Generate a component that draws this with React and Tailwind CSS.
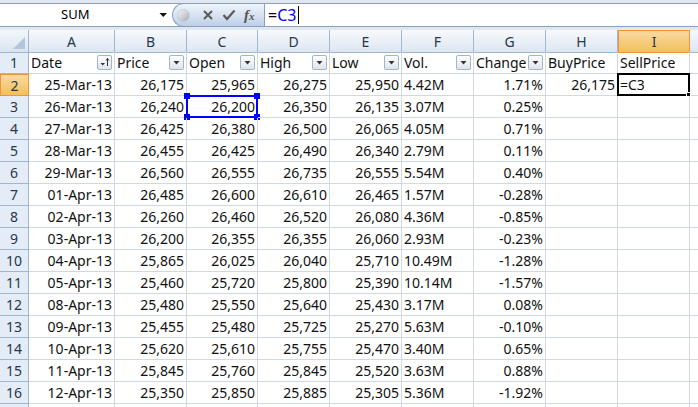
import React from 'react';

const cols = ['A', 'B', 'C', 'D', 'E', 'F', 'G', 'H', 'I'];
const gridCols = 'grid grid-cols-[29px_86px_72px_71px_72px_72px_72px_72px_72px_72px_1fr]';

const headers = [
  { t: 'Date', f: 'sort' },
  { t: 'Price', f: 'down' },
  { t: 'Open', f: 'down' },
  { t: 'High', f: 'down' },
  { t: 'Low', f: 'down' },
  { t: 'Vol.', f: 'down' },
  { t: 'Change', f: 'down' },
  { t: 'BuyPrice' },
  { t: 'SellPrice' },
];

const rows = [
  ['25-Mar-13', '26,175', '25,965', '26,275', '25,950', '4.42M', '1.71%', '26,175', '=C3'],
  ['26-Mar-13', '26,240', '26,200', '26,350', '26,135', '3.07M', '0.25%'],
  ['27-Mar-13', '26,425', '26,380', '26,500', '26,065', '4.05M', '0.71%'],
  ['28-Mar-13', '26,455', '26,425', '26,490', '26,340', '2.79M', '0.11%'],
  ['29-Mar-13', '26,560', '26,555', '26,735', '26,555', '5.54M', '0.40%'],
  ['01-Apr-13', '26,485', '26,600', '26,610', '26,465', '1.57M', '-0.28%'],
  ['02-Apr-13', '26,260', '26,460', '26,520', '26,080', '4.36M', '-0.85%'],
  ['03-Apr-13', '26,200', '26,355', '26,355', '26,060', '2.93M', '-0.23%'],
  ['04-Apr-13', '25,865', '26,025', '26,040', '25,710', '10.49M', '-1.28%'],
  ['05-Apr-13', '25,460', '25,720', '25,800', '25,390', '10.14M', '-1.57%'],
  ['08-Apr-13', '25,480', '25,550', '25,640', '25,430', '3.17M', '0.08%'],
  ['09-Apr-13', '25,455', '25,480', '25,725', '25,270', '5.63M', '-0.10%'],
  ['10-Apr-13', '25,620', '25,610', '25,755', '25,470', '3.40M', '0.65%'],
  ['11-Apr-13', '25,845', '25,760', '25,845', '25,520', '3.63M', '0.88%'],
  ['12-Apr-13', '25,350', '25,850', '25,885', '25,305', '5.36M', '-1.92%'],
];

const FilterButton = ({ sort }) => (
  <div className="w-[15px] h-[15px] shrink-0 rounded-[2px] border border-[#a5b3c6] bg-gradient-to-b from-[#fdfdfe] to-[#dfe5ee] flex items-center justify-center">
    <svg width="13" height="13" viewBox="0 0 13 13">
      {sort ? (
        <>
          <path d="M2.5 7 L7 7 L4.75 9.5 Z" fill="#333" />
          <path d="M9.5 2.5 L9.5 10" stroke="#333" strokeWidth="1" />
          <path d="M8 4.5 L9.5 2.5 L11 4.5" stroke="#333" strokeWidth="1" fill="none" />
        </>
      ) : (
        <path d="M3.5 5 L9.5 5 L6.5 8.5 Z" fill="#333" />
      )}
    </svg>
  </div>
);

const cellBase = 'relative h-[22px] border-r border-b border-[#d0d7e5] px-[2px] flex items-center whitespace-nowrap';

const App = () => {
  return (
    <div className="w-[698px] h-[407px] overflow-hidden bg-white text-[#111] font-['Noto_Sans',sans-serif]">
      {/* Formula bar */}
      <div className="h-[30px] bg-[#dfe7f1] pt-[3px]">
        <div className="h-[24px] flex border-y border-[#8ba0bc] bg-white">
          <div className="w-[172px] flex items-center pl-[61px] pr-[4px] text-[13px] text-black">
            <span className="flex-1">SUM</span>
            <svg width="9" height="6" viewBox="0 0 9 6">
              <path d="M0.5 1 L8 1 L4.25 5 Z" fill="#111" />
            </svg>
          </div>
          <div className="w-[92px] -my-px rounded-l-full border border-r-0 border-[#8ba0bc] bg-gradient-to-b from-[#eef3fa] via-[#d8e3f2] to-[#bccfe8] flex items-center pl-[4px] gap-[8px]">
            <div className="w-[13px] h-[13px] rounded-full bg-gradient-to-br from-[#f4f4f4] to-[#a9aeb6] border border-[#c5ccd6]" />
            <svg width="12" height="12" viewBox="0 0 12 12" className="ml-[4px]">
              <path d="M2 2 L10 10 M10 2 L2 10" stroke="#5b5b5b" strokeWidth="2" />
            </svg>
            <svg width="14" height="12" viewBox="0 0 14 12">
              <path d="M1.5 6 L5 10 L12.5 1.5" stroke="#5b5b5b" strokeWidth="2.2" fill="none" />
            </svg>
            <span className="font-['Liberation_Serif',serif] italic font-bold text-[15px] text-[#555] leading-none">
              f<span className="text-[11px]">x</span>
            </span>
          </div>
          <div className="flex-1 border-l border-[#8ba0bc] flex items-center pl-[3px] text-[16px]">
            <span className="text-black">=</span>
            <span className="text-[#0000ff]">C3</span>
            <span className="w-px h-[18px] bg-black ml-[2px]" />
          </div>
        </div>
      </div>

      {/* Column headers */}
      <div className={`${gridCols} h-[22px] text-[14px] text-[#27374d]`}>
        <div className="relative border-r border-b border-[#9eb6ce] bg-gradient-to-b from-[#f3f7fb] to-[#dae4f0]">
          <svg width="14" height="14" viewBox="0 0 14 14" className="absolute right-[2px] bottom-[2px]">
            <path d="M13 1 L13 13 L1 13 Z" fill="#b6c6da" />
          </svg>
        </div>
        {cols.map((c) =>
          c === 'I' ? (
            <div key={c} className="border border-[#f29436] bg-gradient-to-b from-[#f9d99f] to-[#f1c05c] flex items-center justify-center">
              {c}
            </div>
          ) : (
            <div key={c} className="border-r border-b border-[#9eb6ce] bg-gradient-to-b from-[#f7f9fc] to-[#dde6f1] flex items-center justify-center">
              {c}
            </div>
          )
        )}
        <div className="border-b border-[#9eb6ce] bg-gradient-to-b from-[#f7f9fc] to-[#dde6f1]" />
      </div>

      {/* Row 1: table headers */}
      <div className={`${gridCols} text-[14px]`}>
        <div className="h-[22px] border-r border-b border-[#9eb6ce] bg-[#e4ecf7] flex items-center justify-center text-[#27374d]">1</div>
        {headers.map((h, i) => (
          <div key={i} className={`${cellBase} justify-between overflow-hidden`}>
            <span className="overflow-hidden">{h.t}</span>
            {h.f && <FilterButton sort={h.f === 'sort'} />}
          </div>
        ))}
        <div className="h-[22px] border-b border-[#d0d7e5]" />
      </div>

      {/* Data rows */}
      {rows.map((r, ri) => {
        const rowNum = ri + 2;
        return (
          <div key={rowNum} className={`${gridCols} text-[14px]`}>
            {rowNum === 2 ? (
              <div className="h-[22px] border border-[#f29436] bg-gradient-to-b from-[#f9d99f] to-[#f1c05c] flex items-center justify-center text-[#27374d]">
                {rowNum}
              </div>
            ) : (
              <div className="h-[22px] border-r border-b border-[#9eb6ce] bg-[#e4ecf7] flex items-center justify-center text-[#27374d]">
                {rowNum}
              </div>
            )}
            {cols.map((c, ci) => {
              const v = r[ci] || '';
              const left = ci === 5 || ci === 8;
              return (
                <div key={c} className={`${cellBase} ${left ? 'justify-start' : 'justify-end'}`}>
                  {v}
                  {rowNum === 3 && c === 'C' && (
                    <div className="absolute -left-px -top-px w-[72px] h-[23px] border-2 border-[#0000ff]">
                      <div className="absolute -left-[4px] -top-[4px] w-[6px] h-[6px] bg-[#0000ff]" />
                      <div className="absolute -right-[4px] -top-[4px] w-[6px] h-[6px] bg-[#0000ff]" />
                      <div className="absolute -left-[4px] -bottom-[4px] w-[6px] h-[6px] bg-[#0000ff]" />
                      <div className="absolute -right-[4px] -bottom-[4px] w-[6px] h-[6px] bg-[#0000ff]" />
                    </div>
                  )}
                  {rowNum === 2 && c === 'I' && (
                    <div className="absolute -left-px -top-px w-[73px] h-[23px] border-2 border-black">
                      <div className="absolute -right-[3px] -bottom-[3px] w-[5px] h-[5px] bg-black border border-white" />
                    </div>
                  )}
                </div>
              );
            })}
            <div className="h-[22px] border-b border-[#d0d7e5]" />
          </div>
        );
      })}

      {/* Row 17 (partially visible) */}
      <div className={`${gridCols} text-[14px]`}>
        <div className="h-[22px] border-r border-[#9eb6ce] bg-[#e4ecf7]" />
        {cols.map((c) => (
          <div key={c} className="h-[22px] border-r border-[#d0d7e5]" />
        ))}
        <div />
      </div>
    </div>
  );
};

export default App;
